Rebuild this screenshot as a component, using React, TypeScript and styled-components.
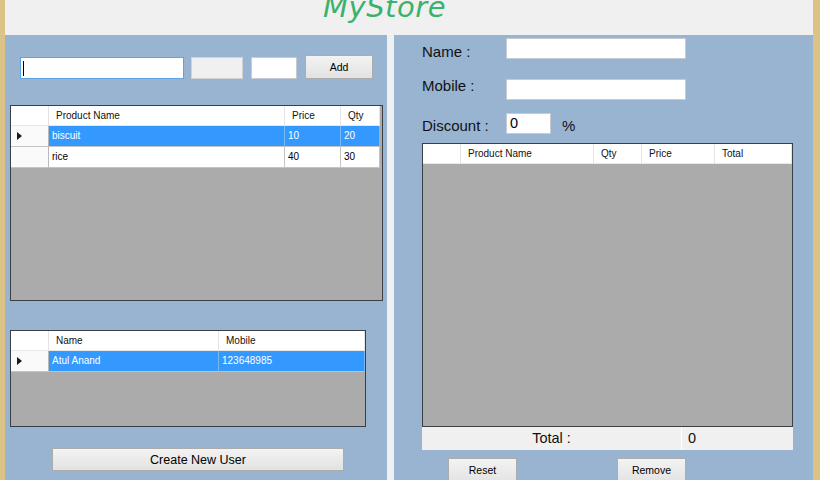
import React from "react";
import styled, { createGlobalStyle } from "styled-components";

const tan = "#dbc286";
const panelBlue = "#99b4d1";
const control = "#f0f0f0";

const GlobalStyle = createGlobalStyle`
  html, body {
    margin: 0;
    padding: 0;
    background: ${control};
  }
  body {
    font-family: "Liberation Sans", Arial, sans-serif;
    color: #000;
  }
  #root {
    width: 820px;
    height: 480px;
    overflow: hidden;
  }
  * {
    box-sizing: border-box;
  }
`;

type Column = { title: string; width: number };

const productColumns: Column[] = [
  { title: "Product Name", width: 236 },
  { title: "Price", width: 56 },
  { title: "Qty", width: 39 },
];
const products = [
  ["biscuit", "10", "20"],
  ["rice", "40", "30"],
];

const userColumns: Column[] = [
  { title: "Name", width: 170 },
  { title: "Mobile", width: 146 },
];
const users = [["Atul Anand", "123648985"]];

const cartColumns: Column[] = [
  { title: "Product Name", width: 133 },
  { title: "Qty", width: 48 },
  { title: "Price", width: 73 },
  { title: "Total", width: 77 },
];

function DataGrid({
  width,
  height,
  columns,
  rows,
  selected,
}: {
  width: number;
  height: number;
  columns: Column[];
  rows: string[][];
  selected?: number;
}) {
  return (
    <GridFrame $width={width} $height={height}>
      <GridRow>
        <RowHeadCell $header />
        {columns.map((c) => (
          <HeaderCell key={c.title} $width={c.width}>
            {c.title}
          </HeaderCell>
        ))}
      </GridRow>
      {rows.map((row, i) => (
        <GridRow key={i}>
          <RowHeadCell>{i === selected && <Pointer />}</RowHeadCell>
          {row.map((value, j) => (
            <DataCell key={j} $width={columns[j].width} $selected={i === selected}>
              {value}
            </DataCell>
          ))}
        </GridRow>
      ))}
    </GridFrame>
  );
}

export default function App() {
  return (
    <>
      <GlobalStyle />
      <Window>
        <TitleBar>
          <Title>MyStore</Title>
        </TitleBar>
        <Body>
          <LeftPanel>
            <EntryRow>
              <TextBox $width={164} $focused>
                <Caret />
              </TextBox>
              <TextBox $width={52} $readOnly />
              <TextBox $width={46} />
              <SmallButton $width={68} $height={24}>Add</SmallButton>
            </EntryRow>
            <GridSlot $top={26}>
              <DataGrid width={373} height={196} columns={productColumns} rows={products} selected={0} />
            </GridSlot>
            <GridSlot $top={29}>
              <DataGrid width={356} height={97} columns={userColumns} rows={users} selected={0} />
            </GridSlot>
            <WideButton>Create New User</WideButton>
          </LeftPanel>

          <RightPanel>
            <FieldRow $top={0}>
              <FieldLabel $shift={5}>Name :</FieldLabel>
              <FieldBox $width={180} />
            </FieldRow>
            <FieldRow $top={19}>
              <FieldLabel $shift={-2}>Mobile :</FieldLabel>
              <FieldBox $width={180} />
            </FieldRow>
            <FieldRow $top={13}>
              <FieldLabel $shift={4}>Discount :</FieldLabel>
              <FieldBox $width={45}>0</FieldBox>
              <Percent>%</Percent>
            </FieldRow>
            <CartSlot>
              <DataGrid width={371} height={284} columns={cartColumns} rows={[]} />
              <TotalBar>
                <TotalLabel>Total :</TotalLabel>
                <TotalValue>0</TotalValue>
              </TotalBar>
            </CartSlot>
            <ActionRow>
              <SmallButton $width={69} $height={27}>Reset</SmallButton>
              <SmallButton $width={69} $height={27}>Remove</SmallButton>
            </ActionRow>
          </RightPanel>
        </Body>
      </Window>
    </>
  );
}

const Window = styled.div`
  width: 820px;
  height: 480px;
  display: flex;
  flex-direction: column;
  background: ${control};
  border-left: 5px solid ${tan};
  border-right: 7px solid ${tan};
  overflow: hidden;
`;

const TitleBar = styled.div`
  height: 35px;
  flex: none;
  padding-left: 318px;
  overflow: hidden;
`;

const Title = styled.div`
  margin-top: -9px;
  font-family: "DejaVu Sans", sans-serif;
  font-style: oblique;
  font-size: 29px;
  line-height: 32px;
  color: #3bb26b;
  letter-spacing: 0.5px;
`;

const Body = styled.div`
  flex: 1;
  display: flex;
  gap: 7px;
  min-height: 0;
`;

const LeftPanel = styled.div`
  width: 382px;
  flex: none;
  background: ${panelBlue};
  padding: 20px 0 0 5px;
  display: flex;
  flex-direction: column;
  align-items: flex-start;
`;

const EntryRow = styled.div`
  display: flex;
  align-items: flex-end;
  gap: 7px;
  margin-left: 10px;

  & > :nth-child(3),
  & > :nth-child(4) {
    margin-left: 1px;
  }
`;

const TextBox = styled.div<{ $width: number; $focused?: boolean; $readOnly?: boolean }>`
  width: ${(p) => p.$width}px;
  height: 22px;
  background: ${(p) => (p.$readOnly ? "#f0f0f0" : "#fff")};
  border: 1px solid ${(p) => (p.$focused ? "#5fa3e6" : p.$readOnly ? "#cfd3d8" : "#c5cbd3")};
  padding: 3px 2px;
`;

const Caret = styled.span`
  display: block;
  width: 1px;
  height: 15px;
  background: #000;
`;

const SmallButton = styled.div<{ $width: number; $height: number }>`
  width: ${(p) => p.$width}px;
  height: ${(p) => p.$height}px;
  flex: none;
  background: linear-gradient(#f3f3f3, #e2e2e2);
  border: 1px solid #acacac;
  font-size: 10.5px;
  display: flex;
  align-items: center;
  justify-content: center;
  padding-bottom: ${(p) => (p.$height > 25 ? 4 : 0)}px;
`;

const GridSlot = styled.div<{ $top: number }>`
  margin-top: ${(p) => p.$top}px;
`;

const GridFrame = styled.div<{ $width: number; $height: number }>`
  width: ${(p) => p.$width}px;
  height: ${(p) => p.$height}px;
  background: #ababab;
  border: 1px solid #3a3f46;
  font-size: 10px;
  overflow: hidden;
`;

const GridRow = styled.div`
  display: flex;
`;

const RowHeadCell = styled.div<{ $header?: boolean }>`
  width: 38px;
  height: ${(p) => (p.$header ? 20 : 21)}px;
  flex: none;
  background: ${(p) => (p.$header ? "#fff" : "#fafafa")};
  border-right: 1px solid ${(p) => (p.$header ? "#e2e2e2" : "#b8b8b8")};
  border-bottom: 1px solid ${(p) => (p.$header ? "#e8e8e8" : "#c4c4c4")};
  display: flex;
  align-items: center;
  padding-left: 6px;
`;

const Pointer = styled.span`
  width: 0;
  height: 0;
  border-top: 4px solid transparent;
  border-bottom: 4px solid transparent;
  border-left: 5px solid #1a1a1a;
`;

const HeaderCell = styled.div<{ $width: number }>`
  width: ${(p) => p.$width}px;
  height: 20px;
  flex: none;
  background: #fff;
  border-right: 1px solid #e4e4e4;
  border-bottom: 1px solid #e8e8e8;
  padding-left: 7px;
  line-height: 19px;
  white-space: nowrap;
  color: #111;
`;

const DataCell = styled.div<{ $width: number; $selected?: boolean }>`
  width: ${(p) => p.$width}px;
  height: 21px;
  flex: none;
  background: ${(p) => (p.$selected ? "#3399ff" : "#fff")};
  color: ${(p) => (p.$selected ? "#fff" : "#000")};
  border-right: 1px solid ${(p) => (p.$selected ? "#7ab8f5" : "#c4c4c4")};
  border-bottom: 1px solid #c4c4c4;
  padding-left: 3px;
  line-height: 20px;
  white-space: nowrap;
`;

const WideButton = styled.div`
  margin: 21px 0 0 42px;
  width: 292px;
  height: 23px;
  background: linear-gradient(#f3f3f3, #e2e2e2);
  border: 1px solid #acacac;
  font-size: 12.5px;
  display: flex;
  align-items: center;
  justify-content: center;
`;

const RightPanel = styled.div`
  flex: 1;
  background: ${panelBlue};
  padding: 3px 0 0 28px;
  display: flex;
  flex-direction: column;
  align-items: flex-start;
  overflow: hidden;
`;

const FieldRow = styled.div<{ $top: number }>`
  display: flex;
  align-items: flex-start;
  margin-top: ${(p) => p.$top}px;
`;

const FieldLabel = styled.div<{ $shift: number }>`
  width: 84px;
  font-size: 15px;
  line-height: 17px;
  margin-top: ${(p) => p.$shift}px;
  color: #111;
`;

const FieldBox = styled.div<{ $width: number }>`
  width: ${(p) => p.$width}px;
  height: 21px;
  background: #fff;
  border: 1px solid #c5cbd3;
  font-size: 14.5px;
  line-height: 18px;
  padding-left: 3px;
`;

const Percent = styled.div`
  margin: 4px 0 0 11px;
  font-size: 15px;
  line-height: 17px;
  color: #111;
`;

const CartSlot = styled.div`
  margin-top: 9px;
  display: flex;
  flex-direction: column;
`;

const TotalBar = styled.div`
  width: 371px;
  height: 23px;
  display: flex;
  background: ${control};
  font-size: 14.5px;
  line-height: 23px;
`;

const TotalLabel = styled.div`
  width: 260px;
  text-align: center;
  border-right: 1px solid #fff;
  color: #111;
`;

const TotalValue = styled.div`
  flex: 1;
  padding-left: 6px;
  color: #111;
`;

const ActionRow = styled.div`
  display: flex;
  gap: 100px;
  margin: 8px 0 0 26px;
`;
